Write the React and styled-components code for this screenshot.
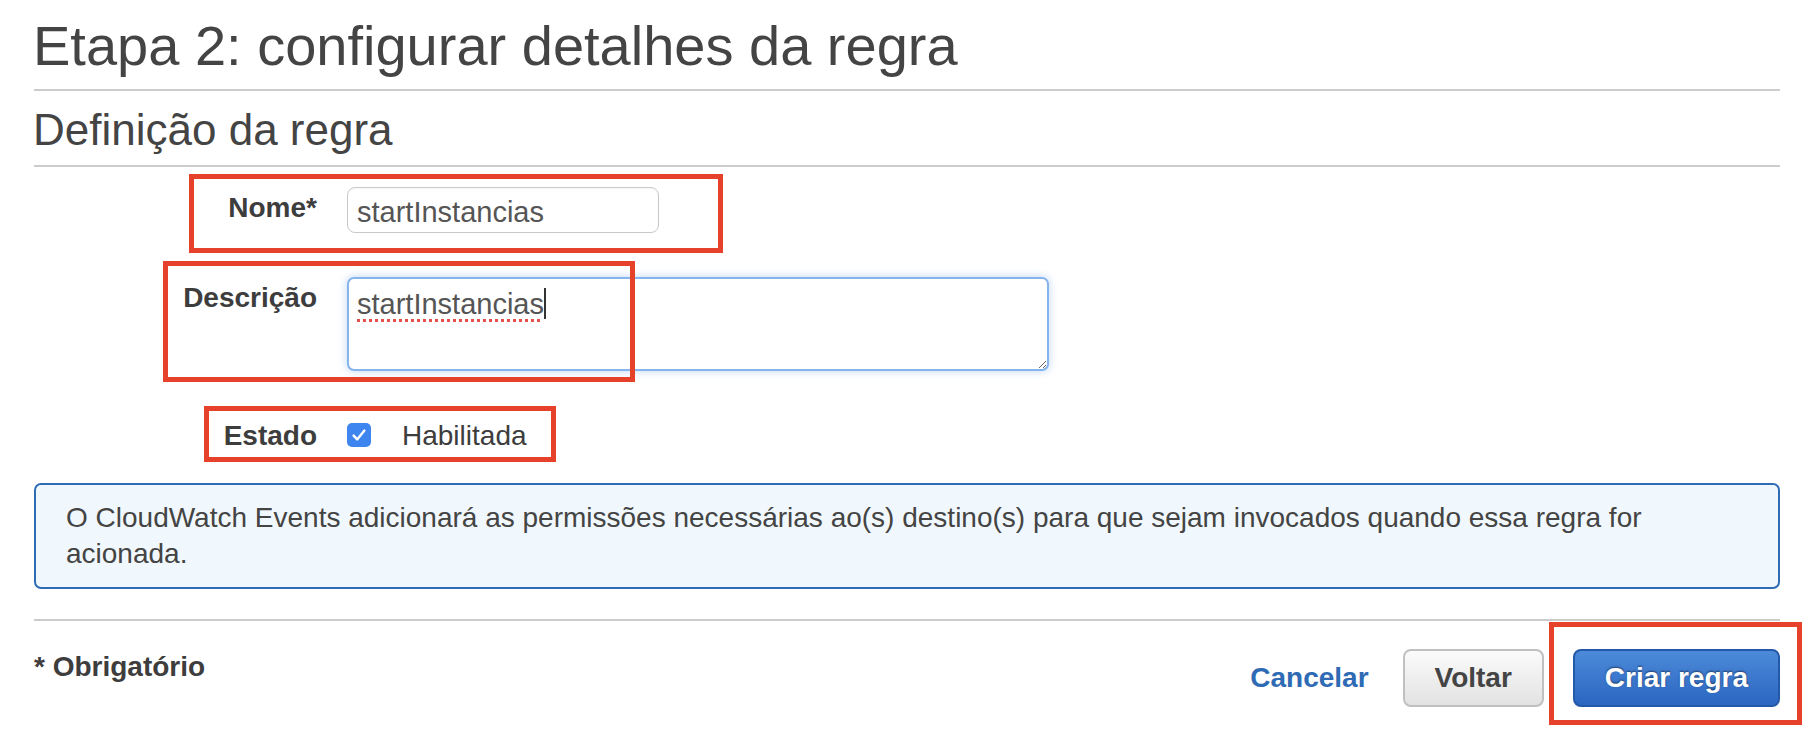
import React from "react";
import styled, { createGlobalStyle } from "styled-components";

const GlobalStyle = createGlobalStyle`
  html, body {
    margin: 0;
    padding: 0;
    background: #ffffff;
  }
  body {
    font-family: "Liberation Sans", Arial, Helvetica, sans-serif;
    color: #444444;
  }
  * { box-sizing: border-box; }
`;

const Page = styled.div`
  position: relative;
  width: 1810px;
  height: 746px;
  padding: 14px 30px 0 34px;
  overflow: hidden;
`;

const Title = styled.h1`
  margin: 0 0 11px -1px;
  font-size: 56px;
  line-height: 64px;
  font-weight: 400;
  color: #444444;
  letter-spacing: 0;
`;

const Subtitle = styled.h2`
  margin: 13px 0 9px -1px;
  font-size: 44px;
  line-height: 52px;
  font-weight: 400;
  color: #444444;
`;

const Rule = styled.hr`
  margin: 0;
  border: 0;
  height: 2px;
  background: #cccccc;
`;

const Form = styled.div`
  display: flex;
  flex-direction: column;
  padding-top: 20px;
`;

const FieldRow = styled.div`
  display: grid;
  grid-template-columns: 283px auto;
  column-gap: 30px;
  align-items: ${(p) => (p.$center ? "center" : "start")};
  margin-top: ${(p) => p.$mt || 0}px;
`;

const Label = styled.label`
  text-align: right;
  font-size: 28px;
  line-height: 32px;
  font-weight: 700;
  color: #3d3d3d;
  padding-top: ${(p) => (p.$center ? 0 : 5)}px;
`;

const TextInput = styled.input`
  width: 312px;
  height: 46px;
  padding: 5px 10px 0 9px;
  border: 1.5px solid #c9c9c9;
  border-radius: 8px;
  font-family: "Liberation Sans", Arial, sans-serif;
  font-size: 29px;
  color: #555555;
  background: #ffffff;
  outline: none;
  box-shadow: inset 0 1px 2px rgba(0, 0, 0, 0.04);
`;

const AreaWrap = styled.div`
  position: relative;
  width: 702px;
  height: 94px;
`;

const TextArea = styled.textarea`
  display: block;
  width: 702px;
  height: 94px;
  padding: 8px 10px 0 8px;
  border: 2px solid #86b4ec;
  border-radius: 7px;
  font-family: "Liberation Sans", Arial, sans-serif;
  font-size: 29px;
  line-height: 34px;
  color: #555555;
  background: #ffffff;
  outline: none;
  resize: both;
  box-shadow: 0 0 9px rgba(110, 165, 235, 0.45);
  text-decoration-line: underline;
  text-decoration-style: dotted;
  text-decoration-color: #e5504a;
  text-decoration-thickness: 3px;
  text-underline-offset: 5px;
`;

const Caret = styled.span`
  position: absolute;
  left: 197px;
  top: 11px;
  width: 2px;
  height: 31px;
  background: #333333;
  pointer-events: none;
`;

const CheckLine = styled.div`
  display: flex;
  align-items: center;
  gap: 31px;
`;

const CheckBox = styled.span`
  display: inline-flex;
  align-items: center;
  justify-content: center;
  width: 24px;
  height: 24px;
  border-radius: 5px;
  background: #3f85ef;
  margin-bottom: 2px;
`;

const CheckText = styled.span`
  font-size: 28px;
  line-height: 32px;
  color: #3d3d3d;
`;

const InfoBox = styled.div`
  margin-top: 31px;
  padding: 15px 30px 15px 30px;
  border: 2px solid #2f6cb3;
  border-radius: 7px;
  background: #f1f8fd;
  font-size: 28px;
  line-height: 36px;
  color: #444444;
`;

const BottomRule = styled(Rule)`
  margin-top: 30px;
`;

const Footer = styled.div`
  display: flex;
  align-items: flex-start;
  justify-content: space-between;
  padding-top: 28px;
`;

const Required = styled.div`
  margin-top: 2px;
  font-size: 28px;
  line-height: 32px;
  font-weight: 700;
  color: #3d3d3d;
`;

const Actions = styled.div`
  display: flex;
  align-items: center;
`;

const LinkButton = styled.a`
  font-size: 28px;
  font-weight: 700;
  color: #2e6bb4;
  text-decoration: none;
  margin-right: 34px;
  cursor: pointer;
`;

const Button = styled.button`
  height: 58px;
  padding: 0 30px;
  border-radius: 8px;
  font-family: "Liberation Sans", Arial, sans-serif;
  font-size: 28px;
  font-weight: 700;
  cursor: pointer;
  border: 2px solid ${(p) => (p.$primary ? "#2359a8" : "#c0c0c0")};
  color: ${(p) => (p.$primary ? "#ffffff" : "#444444")};
  background: ${(p) =>
    p.$primary
      ? "linear-gradient(#4c8ad9, #2b66c1)"
      : "linear-gradient(#fbfbfb, #e2e2e2)"};
  text-shadow: ${(p) => (p.$primary ? "0 -1px 2px rgba(0,0,0,0.5)" : "none")};
  margin-left: ${(p) => (p.$primary ? 29 : 0)}px;
`;

const Highlight = styled.div`
  position: absolute;
  left: ${(p) => p.$x}px;
  top: ${(p) => p.$y}px;
  width: ${(p) => p.$w}px;
  height: ${(p) => p.$h}px;
  border: 5px solid #e6412b;
  pointer-events: none;
`;

const highlights = [
  { x: 189, y: 174, w: 534, h: 79 },
  { x: 163, y: 261, w: 472, h: 121 },
  { x: 204, y: 406, w: 352, h: 56 },
  { x: 1549, y: 622, w: 253, h: 103 },
];

export default function App() {
  return (
    <>
      <GlobalStyle />
      <Page>
        <Title>Etapa 2: configurar detalhes da regra</Title>
        <Rule />
        <Subtitle>Definição da regra</Subtitle>
        <Rule />
        <Form>
          <FieldRow>
            <Label>Nome*</Label>
            <TextInput defaultValue="startInstancias" spellCheck={false} />
          </FieldRow>
          <FieldRow $mt={44}>
            <Label>Descrição</Label>
            <AreaWrap>
              <TextArea defaultValue="startInstancias" spellCheck={false} />
              <Caret />
            </AreaWrap>
          </FieldRow>
          <FieldRow $mt={49} $center>
            <Label $center>Estado</Label>
            <CheckLine>
              <CheckBox>
                <svg width="20" height="20" viewBox="0 0 20 20">
                  <path
                    d="M4.6 10.6 L8.2 14.4 L15.4 5.6"
                    fill="none"
                    stroke="#ffffff"
                    strokeWidth="2.4"
                    strokeLinecap="round"
                    strokeLinejoin="round"
                  />
                </svg>
              </CheckBox>
              <CheckText>Habilitada</CheckText>
            </CheckLine>
          </FieldRow>
        </Form>
        <InfoBox>
          O CloudWatch Events adicionará as permissões necessárias ao(s)
          destino(s) para que sejam invocados quando essa regra for acionada.
        </InfoBox>
        <BottomRule />
        <Footer>
          <Required>* Obrigatório</Required>
          <Actions>
            <LinkButton>Cancelar</LinkButton>
            <Button>Voltar</Button>
            <Button $primary>Criar regra</Button>
          </Actions>
        </Footer>
        {highlights.map((h, i) => (
          <Highlight key={i} $x={h.x} $y={h.y} $w={h.w} $h={h.h} />
        ))}
      </Page>
    </>
  );
}
